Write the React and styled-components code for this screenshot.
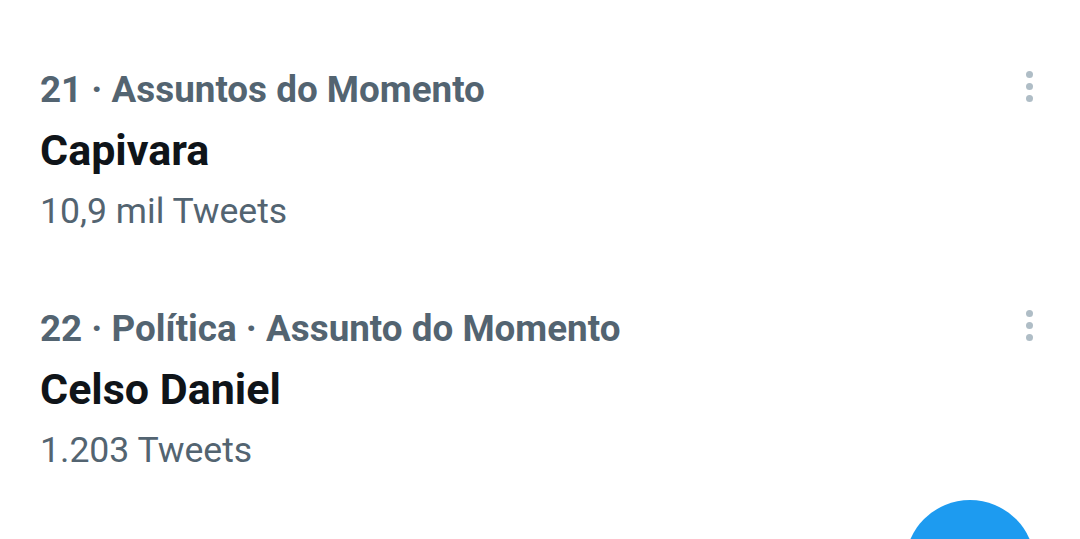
import React from 'react'
import styled, { createGlobalStyle } from 'styled-components'

const GlobalStyle = createGlobalStyle`
  body {
    margin: 0px;
    background: #ffffff;
  }
`

const Page = styled.div`
  position: relative;
  width: 1080px;
  height: 539px;
  overflow: hidden;
  background: #ffffff;
  font-family: Roboto, "Noto Sans", sans-serif;
`

const Trend = styled.div`
  position: relative;
  display: flex;
  flex-direction: column;
  padding: 60px 40px 0 40px;
  height: 239px;
  box-sizing: border-box;
`

const Category = styled.div`
  font-size: 36.8px;
  font-weight: 700;
  line-height: 60px;
  color: #536471;
`

const Title = styled.div`
  font-size: 43px;
  font-weight: 700;
  line-height: 61px;
  color: #0f1419;
`

const Count = styled.div`
  font-size: 35.6px;
  font-weight: 400;
  line-height: 60px;
  color: #536471;
`

const MoreButton = styled.div`
  position: absolute;
  top: 71px;
  right: 47px;
  display: flex;
  flex-direction: column;
  gap: 5px;
`

const Dot = styled.span`
  width: 7px;
  height: 7px;
  border-radius: 50%;
  background: #afbdc6;
`

const Fab = styled.div`
  position: absolute;
  left: 905px;
  top: 500px;
  width: 130px;
  height: 130px;
  border-radius: 50%;
  background: #1d9bf0;
`

const trends = [
  { category: '21 · Assuntos do Momento', title: 'Capivara', count: '10,9 mil Tweets' },
  { category: '22 · Política · Assunto do Momento', title: 'Celso Daniel', count: '1.203 Tweets' },
]

function App() {
  return (
    <>
      <GlobalStyle />
      <Page>
        {trends.map((t) => (
          <Trend key={t.title}>
            <Category>{t.category}</Category>
            <Title>{t.title}</Title>
            <Count>{t.count}</Count>
            <MoreButton>
              <Dot />
              <Dot />
              <Dot />
            </MoreButton>
          </Trend>
        ))}
        <Fab />
      </Page>
    </>
  )
}

export default App
